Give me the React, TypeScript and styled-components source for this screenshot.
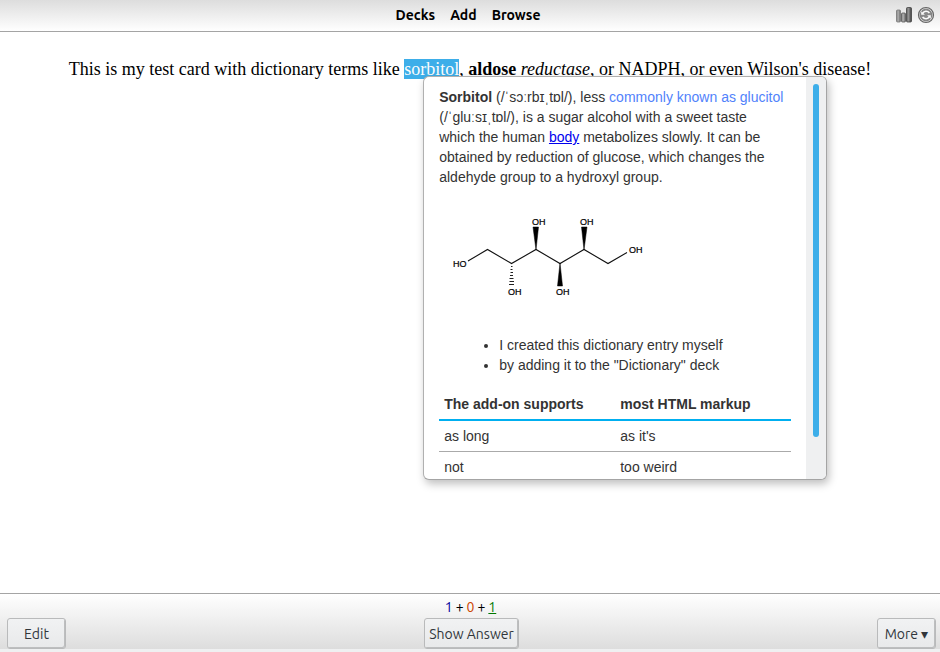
import React from "react";
import styled, { createGlobalStyle } from "styled-components";

const GlobalStyle = createGlobalStyle`
  *, *::before, *::after { box-sizing: border-box; }
  body { margin: 0; background: #fff; }
`;

const uiFont = `"Ubuntu", "Noto Sans", sans-serif`;

const Page = styled.div`
  display: flex;
  flex-direction: column;
  min-height: 100vh;
`;

const TopBar = styled.header`
  display: grid;
  grid-template-columns: 1fr auto 1fr;
  align-items: center;
  height: 32px;
  padding: 0 5px 2px;
  border-bottom: 1px solid #a4a4a4;
  background: linear-gradient(#dddddd, #ffffff);
`;

const Nav = styled.nav`
  display: flex;
  grid-column: 2;
  gap: 15px;
  padding-right: 4px;
`;

const NavLink = styled.a`
  color: #000;
  font: bold 14px/20px ${uiFont};
  text-decoration: none;
`;

const Tools = styled.div`
  display: flex;
  justify-content: flex-end;
  gap: 4px;
`;

const IconButton = styled.button`
  display: flex;
  padding: 0;
  border: 0;
  background: none;
`;

const CardArea = styled.main`
  flex: 1;
  padding: 26px 20px 20px;
  color: #000;
  font: 18px/22px "Liberation Serif", serif;
  text-align: center;
`;

const CardText = styled.div`
  margin: 0;
`;

const Term = styled.span`
  position: relative;
  background: #3daee9;
  color: #fcfcfc;
`;

const Tooltip = styled.aside`
  position: absolute;
  top: 17px;
  left: 19px;
  z-index: 1;
  display: flex;
  width: 404px;
  height: 404px;
  overflow: hidden;
  border: 1px solid #b0b0b0;
  border-right-color: #a4a4a4;
  border-bottom-color: #a4a4a4;
  border-radius: 6px;
  background: #fff;
  box-shadow: 2px 4px 9px rgba(0, 0, 0, 0.25);
  color: #333;
  font: 14px/20px "Liberation Sans", Arial, sans-serif;
  text-align: left;
`;

const Entry = styled.div`
  flex: 1;
  overflow: hidden;
  padding: 10px 15px;
`;

const Definition = styled.p`
  margin: 0;
  padding-right: 6px;
`;

const SoftText = styled.span`
  color: #5182fb;
`;

const BodyLink = styled.a`
  color: #0000ee;
`;

const Structure = styled.svg`
  display: block;
  margin: 14px 0;
`;

const Notes = styled.ul`
  margin: 0 0 14px;
  padding-left: 60px;
`;

const Terms = styled.table`
  width: 100%;
  border-collapse: separate;
  border-spacing: 0;
  table-layout: fixed;
`;

const HeadCell = styled.th`
  padding: 5px;
  border-bottom: 2px solid #00aff0;
  text-align: left;
`;

const Cell = styled.td`
  padding: 5px;
  border-bottom: 1px solid #aaa;
`;

const ScrollTrack = styled.div`
  flex: none;
  width: 20px;
  padding: 7px;
  background: #eff0f1;
`;

const ScrollThumb = styled.div`
  height: 353px;
  border-radius: 3px;
  background: #3daee9;
`;

const BottomBar = styled.footer`
  border-top: 1px solid #a4a4a4;
  border-bottom: 3px solid #eff0f1;
  background: linear-gradient(#ffffff, #dddddd);
  font: 14px/20px ${uiFont};
`;

const Counts = styled.div`
  display: flex;
  justify-content: center;
  gap: 3px;
  padding: 3px 0 1px 1px;
  color: #000;
`;

const Count = styled.span<{ $color: string; $current?: boolean }>`
  color: ${({ $color }) => $color};
  text-decoration: ${({ $current }) => ($current ? "underline" : "none")};
`;

const Actions = styled.div`
  display: grid;
  grid-template-columns: 1fr auto 1fr;
  padding: 0 4px 0 7px;
`;

const ActionButton = styled.button<{ $align?: string }>`
  justify-self: ${({ $align }) => $align ?? "center"};
  min-width: 59px;
  height: 31px;
  padding: 0 4px;
  border: 1px solid #b9babb;
  border-radius: 3px;
  background: linear-gradient(#f1f2f3, #e8e9ea);
  box-shadow: inset -1px -1px 0 #bdbebf;
  color: #31363b;
  font: 14px/20px ${uiFont};
  white-space: nowrap;
`;

const StatsIcon = () => (
  <svg width="18" height="18" viewBox="0 0 18 18" aria-hidden="true">
    <defs>
      <linearGradient id="bar">
        <stop offset="0" stopColor="#777" />
        <stop offset="0.4" stopColor="#b4b4b4" />
        <stop offset="1" stopColor="#666" />
      </linearGradient>
      <linearGradient id="darkBar">
        <stop offset="0" stopColor="#555" />
        <stop offset="0.35" stopColor="#999" />
        <stop offset="1" stopColor="#3c3c3c" />
      </linearGradient>
    </defs>
    <g strokeWidth="0.8">
      <rect x="1.5" y="4" width="4" height="12" rx="1" fill="url(#bar)" stroke="#777" />
      <rect x="6.5" y="7" width="4" height="9" rx="1" fill="url(#bar)" stroke="#555" />
      <rect x="11.5" y="1.5" width="5" height="14.5" rx="1" fill="url(#darkBar)" stroke="#444" />
    </g>
  </svg>
);

const SyncIcon = () => (
  <svg width="18" height="18" viewBox="0 0 18 18" aria-hidden="true">
    <circle cx="9" cy="9" r="7.5" fill="#d4d4d4" stroke="#666" strokeWidth="1.2" />
    <circle cx="9" cy="9" r="5.8" fill="#8a8a8a" stroke="#777" strokeWidth="0.8" />
    <g fill="none" stroke="#fafafa" strokeWidth="1.6">
      <path d="M12.4 6.9C10.600 4.700 7 4.700 5.600 7.400" />
      <path d="M5.600 11.100C7.400 13.300 11 13.300 12.400 10.600" />
    </g>
    <path d="M4.200 5.200V8.800H7.900Z M13.800 12.800V9.200H10.100Z" fill="#fafafa" />
  </svg>
);

const hydroxyls = [
  { x: 14, y: 66, label: "HO" },
  { x: 69, y: 94, label: "OH" },
  { x: 93, y: 24, label: "OH" },
  { x: 117, y: 94, label: "OH" },
  { x: 141, y: 24, label: "OH" },
  { x: 190, y: 52, label: "OH" },
];

const Sorbitol = () => (
  <Structure width="220" height="120" viewBox="0 0 220 120" role="img" aria-label="Structure of sorbitol">
    <path
      d="M29 60L48.500 48.500L72.500 62.500L97 48.500L121 62.500L145 48.500L169 62.500L188 51.500"
      fill="none"
      stroke="#111"
      strokeWidth="1.1"
    />
    <path d="M97 49L94 26H99.500Z M145 49L142.500 26H148Z M121 62L118.500 85H123.500Z" fill="#000" stroke="#000" strokeWidth="0.5" />
    <path d="M72 65.500h1.500M71.500 68.500h2M71.500 71.500h2.500M71 74.500h3M70.500 77.500h4M70.500 80.500h4.500M70 83.500h5" stroke="#222" />
    <g fill="#000" stroke="#000" strokeWidth="0.2" fontFamily="Liberation Sans, Arial, sans-serif" fontSize="9">
      {hydroxyls.map(({ x, y, label }) => (
        <text key={`${x}-${y}`} x={x} y={y}>{label}</text>
      ))}
    </g>
  </Structure>
);

const rows = [
  ["as long", "as it's"],
  ["not", "too weird"],
];

export default function App() {
  return (
    <Page>
      <GlobalStyle />
      <TopBar>
        <Nav>
          <NavLink href="#decks">Decks</NavLink>
          <NavLink href="#add">Add</NavLink>
          <NavLink href="#browse">Browse</NavLink>
        </Nav>
        <Tools>
          <IconButton type="button" aria-label="Statistics"><StatsIcon /></IconButton>
          <IconButton type="button" aria-label="Sync"><SyncIcon /></IconButton>
        </Tools>
      </TopBar>
      <CardArea>
        <CardText>
          This is my test card with dictionary terms like{" "}
          <Term>
            sorbitol
            <Tooltip>
              <Entry>
                <Definition>
                  <b>Sorbitol</b> (/ˈsɔːrbɪˌtɒl/), less <SoftText>commonly known as glucitol</SoftText>{" "}
                  (/ˈɡluːsɪˌtɒl/), is a sugar alcohol with a sweet taste which the human{" "}
                  <BodyLink href="#body">body</BodyLink> metabolizes slowly. It can be obtained by
                  reduction of glucose, which changes the aldehyde group to a hydroxyl group.
                </Definition>
                <Sorbitol />
                <Notes>
                  <li>I created this dictionary entry myself</li>
                  <li>by adding it to the "Dictionary" deck</li>
                </Notes>
                <Terms>
                  <thead>
                    <tr>
                      <HeadCell scope="col">The add-on supports</HeadCell>
                      <HeadCell scope="col">most HTML markup</HeadCell>
                    </tr>
                  </thead>
                  <tbody>
                    {rows.map(([first, second]) => (
                      <tr key={first}>
                        <Cell>{first}</Cell>
                        <Cell>{second}</Cell>
                      </tr>
                    ))}
                  </tbody>
                </Terms>
              </Entry>
              <ScrollTrack><ScrollThumb /></ScrollTrack>
            </Tooltip>
          </Term>
          , <b>aldose</b> <i>reductase</i>, or NADPH, or even Wilson's disease!
        </CardText>
      </CardArea>
      <BottomBar>
        <Counts>
          <Count $color="#000099">1</Count>+<Count $color="#cc4400">0</Count>+
          <Count $color="#007700" $current>1</Count>
        </Counts>
        <Actions>
          <ActionButton type="button" $align="start">Edit</ActionButton>
          <ActionButton type="button">Show Answer</ActionButton>
          <ActionButton type="button" $align="end">More ▾</ActionButton>
        </Actions>
      </BottomBar>
    </Page>
  );
}
